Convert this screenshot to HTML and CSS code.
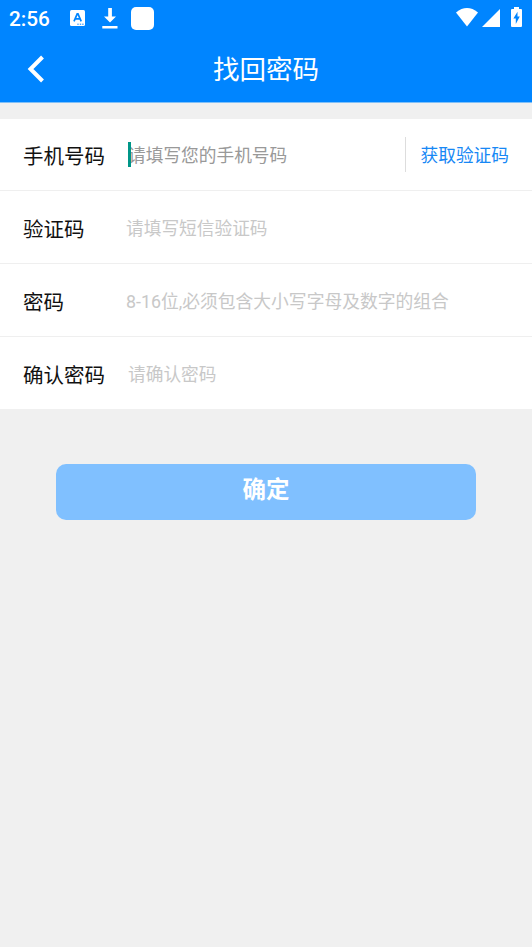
FILE: index.html
```html
<!DOCTYPE html>
<html lang="zh-CN">
<head>
<meta charset="utf-8">
<meta name="viewport" content="width=device-width">
<title>找回密码</title>
<link rel="stylesheet" href="styles.css">
</head>
<body>
<header class="header">
  <div class="status">
    <span class="time">2:56</span>
    <svg class="i-lang" width="15" height="16" viewBox="0 0 15 16"><rect width="15" height="16" rx="1.5" fill="#fff"/><path d="M4 11.3 7.2 3.8h.8l3.2 7.5M5.3 8.800h4.600" fill="none" stroke="#0085ff" stroke-width="1.7"/><path d="M7.3 14.2h1.4M9.8 14.2h1.4M12.2 14.2h1.4" stroke="#0085ff" stroke-width="1"/></svg>
    <svg class="i-down" width="16" height="21" viewBox="0 0 16 21"><path d="M6.2 0h3.7v8.5H14L8 14.5 2 8.5h4.2zM.3 18h15.2v2.4H.3z" fill="#fff"/></svg>
    <span class="app"></span>
    <svg class="i-wifi" width="22" height="19" viewBox="0 0 22 19"><path d="M0 4.4Q11-4.2 22 4.4L11 18.5z" fill="#fff"/></svg>
    <svg class="i-signal" width="18" height="18" viewBox="0 0 18 18"><path d="M18 0v18H0z" fill="#fff"/></svg>
    <svg class="i-battery" width="11" height="20" viewBox="0 0 11 20"><path d="M3 0h5v2h2q1 0 1 1v16q0 1-1 1H1q-1 0-1-1V3q0-1 1-1h2z" fill="#fff"/><path d="M6.5 4.8 2.4 11.6h2.4v5.3l4-7.4H6.5z" fill="#0085ff"/></svg>
  </div>
  <div class="nav">
    <svg class="back" width="18" height="28" viewBox="0 0 18 28"><path d="M15.500 2 3.500 14l12 12" fill="none" stroke="#fff" stroke-width="4"/></svg>
    <h1 class="title">找回密码</h1>
  </div>
</header>
<main>
  <div class="form">
    <div class="row first">
      <span class="label">手机号码</span>
      <span class="field focused"><i class="caret"></i>请填写您的手机号码</span>
      <span class="code">获取验证码</span>
    </div>
    <div class="row"><span class="label">验证码</span><span class="field">请填写短信验证码</span></div>
    <div class="row"><span class="label">密码</span><span class="field rule">8-16位,必须包含大小写字母及数字的组合</span></div>
    <div class="row"><span class="label">确认密码</span><span class="field confirm">请确认密码</span></div>
  </div>
  <button class="submit">确定</button>
</main>
</body>
</html>
```
FILE: styles.css
```css
* { box-sizing: border-box; }
body {
  margin: 0;
  min-height: 947px;
  background: #f0f0f0;
  font-family: Roboto, "Noto Sans CJK SC", sans-serif;
}
.header { height: 102px; background: #0085ff; color: #fff; box-shadow: 0 1px #80c0f8; }
.status { display: flex; height: 36px; padding: 0 10px 0 9px; align-items: center; }
.status svg { display: block; flex: none; }
.time { width: 61px; font-size: 20.800px; font-weight: 500; line-height: 36px; padding-top: 1px; }
.i-down { margin-left: 17px; }
.app { width: 23px; height: 23px; margin-left: 13px; border-radius: 5px; background: #fff; }
.i-wifi { margin-left: auto; margin-top: -2px; }
.i-signal { margin-left: 4px; }
.i-battery { margin-left: 11px; margin-top: -3px; }
.nav { display: grid; grid-template-columns: 60px 1fr 60px; height: 66px; align-items: center; }
.back { margin: 0 0 0 27px; }
.title { margin: 0; padding-top: 2px; text-align: center; font-size: 26.500px; font-weight: 400; line-height: 40px; }
.form { margin-top: 17px; background: #fff; }
.row { display: flex; height: 73px; align-items: center; padding: 3px 23px 0; border-bottom: 1px solid #efefef; }
.first { height: 72px; }
.row:last-child { height: 72px; padding-top: 4px; border-bottom: 0; }
.label { width: 103px; flex: none; padding-top: 2px; font-size: 20.500px; line-height: 30px; color: #111; }
.field { flex: 1; font-size: 17.700px; line-height: 28px; color: #c8c8c8; white-space: nowrap; }
.focused { position: relative; padding-left: 2px; color: #999; }
.rule { font-size: 17.800px; }
.confirm { padding-left: 2px; }
.caret { position: absolute; left: 2px; top: 0; width: 3px; height: 25px; background: #009688; }
.code { height: 35px; margin-top: -3px; padding-left: 15px; border-left: 1px solid #ddd; color: #1788f5; font-size: 17.700px; line-height: 38px; }
.submit {
  display: block;
  width: 420px;
  height: 56px;
  margin: 54.500px auto 0;
  padding: 0 0 4px;
  border: 0;
  border-radius: 10px;
  background: #80c0ff;
  color: #fff;
  font: 700 23.500px/52px Roboto, "Noto Sans CJK SC", sans-serif;
}
```
